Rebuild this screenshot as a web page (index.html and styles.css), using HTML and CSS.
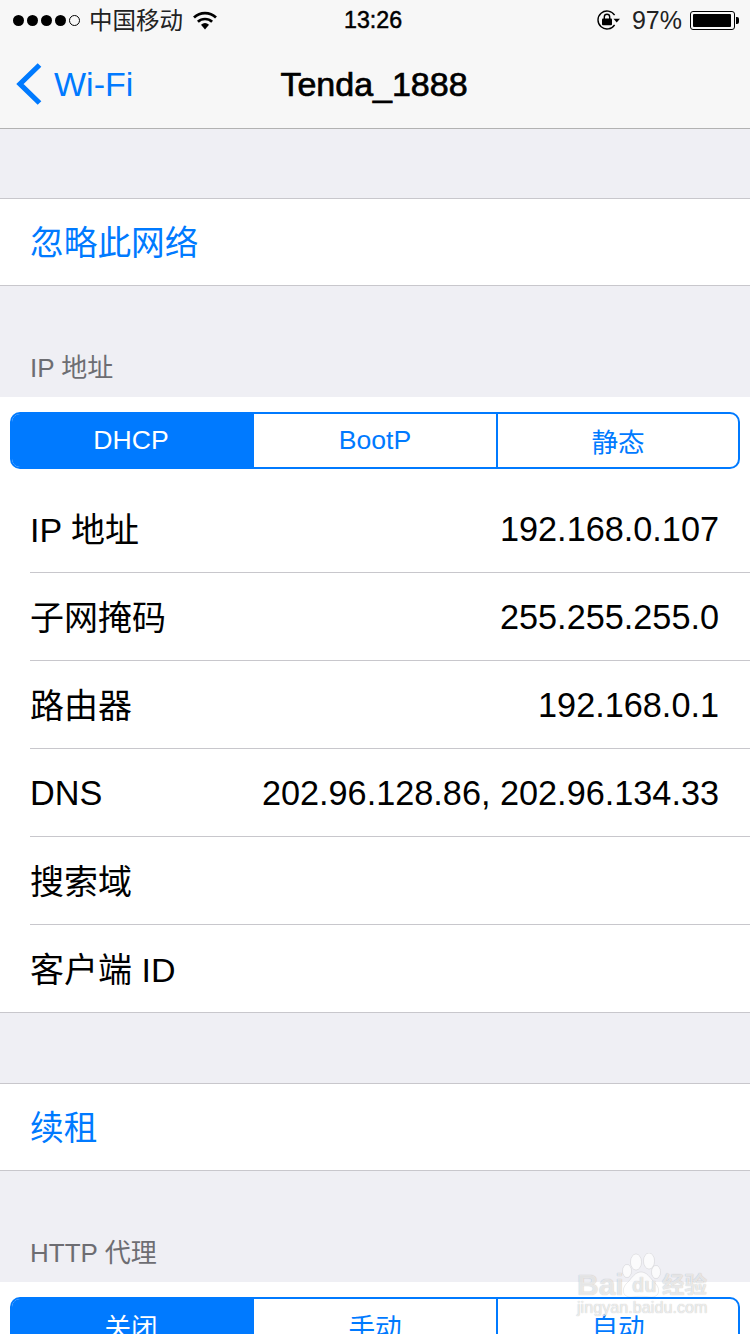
FILE: index.html
```html
<!DOCTYPE html>
<html lang="zh-CN">
<head>
    <meta charset="UTF-8">
    <meta name="viewport" content="width=device-width, initial-scale=1.0">
    <title>Tenda_1888</title>
    <link rel="stylesheet" href="styles.css">
</head>
<body>
    <!-- 状态栏 -->
    <div class="status-bar">
        <div class="status-left">
            <div class="signal">
                <i class="dot"></i><i class="dot"></i><i class="dot"></i><i class="dot"></i><i class="dot empty"></i>
            </div>
            <span class="carrier">中国移动</span>
            <svg class="wifi" width="24" height="19" viewBox="0 0 24 19">
                <path d="M12 18.5 L8 13.8 A6.2 6.2 0 0 1 16 13.8 Z" fill="#000"/>
                <path d="M4.9 10.8 A10.4 10.4 0 0 1 19.1 10.8" fill="none" stroke="#000" stroke-width="2.7"/>
                <path d="M1 6.6 A16 16 0 0 1 23 6.6" fill="none" stroke="#000" stroke-width="2.7"/>
            </svg>
        </div>
        <div class="status-time">13:26</div>
        <div class="status-right">
            <svg class="lock" width="23" height="20" viewBox="0 0 23 20">
                <path d="M17.6 14.8 A9 9 0 1 1 17.6 5.2" fill="none" stroke="#000" stroke-width="1.4"/>
                <path d="M16.5 8.8 L23 8.8 L19.7 12.6 Z" fill="#000"/>
                <rect x="5" y="8.6" width="10" height="6.6" rx="1" fill="#000"/>
                <path d="M7.3 9 V7 A2.7 2.7 0 0 1 12.7 7 V9" fill="none" stroke="#000" stroke-width="1.4"/>
            </svg>
            <span class="percent">97%</span>
            <div class="battery"><div class="battery-fill"></div></div>
        </div>
    </div>

    <!-- 导航栏 -->
    <div class="nav-bar">
        <div class="nav-back">
            <svg width="28" height="44" viewBox="0 0 28 44">
                <path d="M24.5 3 L5 22 L24.5 41" fill="none" stroke="#007aff" stroke-width="5.2"/>
            </svg>
            <span>Wi-Fi</span>
        </div>
        <div class="nav-title">Tenda_1888</div>
    </div>

    <div class="spacer-top"></div>
    <div class="action-row">忽略此网络</div>

    <div class="section-header">IP 地址</div>
    <div class="section">
        <div class="segment">
            <div class="segment-item active">DHCP</div>
            <div class="segment-item">BootP</div>
            <div class="segment-item">静态</div>
        </div>
        <div class="info-row"><span class="label">IP 地址</span><span class="value">192.168.0.107</span></div>
        <div class="info-row"><span class="label">子网掩码</span><span class="value">255.255.255.0</span></div>
        <div class="info-row"><span class="label">路由器</span><span class="value">192.168.0.1</span></div>
        <div class="info-row"><span class="value">DNS</span><span class="value">202.96.128.86, 202.96.134.33</span></div>
        <div class="info-row"><span class="label">搜索域</span></div>
        <div class="info-row last"><span class="label">客户端 ID</span></div>
    </div>

    <div class="spacer-mid"></div>
    <div class="action-row">续租</div>

    <div class="section-header">HTTP 代理</div>
    <div class="section">
        <div class="segment">
            <div class="segment-item active">关闭</div>
            <div class="segment-item">手动</div>
            <div class="segment-item">自动</div>
        </div>
    </div>

    <!-- 水印 -->
    <div class="watermark">
        <svg class="paw" width="42" height="46" viewBox="0 0 42 46">
            <g fill="#fff" fill-opacity="0.75" stroke="#000" stroke-opacity="0.08">
                <ellipse cx="7" cy="18" rx="4.5" ry="6.5"/>
                <ellipse cx="16" cy="9" rx="5.5" ry="8"/>
                <ellipse cx="29" cy="8" rx="5.5" ry="8"/>
                <ellipse cx="36" cy="19" rx="4.5" ry="6.5"/>
                <path d="M21 19 C27 19 30 25 34 29 C42 36 39 45 30 44 C24 43 18 43 12 44 C3 45 0 36 8 29 C12 25 15 19 21 19 Z"/>
            </g>
        </svg>
        <span class="wm-bai">Bai</span>
        <span class="wm-du">du</span>
        <span class="wm-cn">经验</span>
        <span class="wm-url">jingyan.baidu.com</span>
    </div>
</body>
</html>
```

FILE: styles.css
```css
/* 基础样式 */
html, body {
    height: 100%;
}

body {
    margin: 0;
    height: 1334px;
    overflow: hidden;
    position: relative;
    background-color: #efeff4;
    color: #000;
    font-family: "Liberation Sans", "Noto Sans CJK SC", sans-serif;
    font-size: 34px;
}

/* 状态栏 */
.status-bar {
    height: 40px;
    display: grid;
    grid-template-columns: 1fr auto 1fr;
    align-items: center;
    background-color: #f7f7f7;
    font-size: 24px;
}

.status-left {
    display: flex;
    align-items: center;
    padding-left: 13px;
}

.signal {
    display: flex;
    gap: 3px;
    margin-right: 9px;
}

.dot {
    width: 11px;
    height: 11px;
    border-radius: 50%;
    background: #000;
    box-sizing: border-box;
}

.dot.empty {
    background: none;
    border: 1px solid #000;
}

.carrier {
    margin: 0 10px 3px 0;
    font-size: 23.5px;
    color: #222;
}

.status-time {
    width: 58px;
    margin: 0 2px 0 -2px;
    font-size: 23.2px;
    -webkit-text-stroke: 0.5px #000;
    text-align: center;
}

.status-right {
    display: flex;
    align-items: center;
    justify-content: flex-end;
    padding-right: 15px;
}

.percent {
    margin-left: 12px;
    font-size: 25px;
    color: #222;
}

.battery {
    width: 45px;
    height: 19px;
    margin-left: 8px;
    padding: 2px;
    box-sizing: border-box;
    border: 1px solid #000;
    border-radius: 3px;
    position: relative;
}

.battery::after {
    content: "";
    position: absolute;
    right: -5px;
    top: 5px;
    width: 3px;
    height: 7px;
    background: #000;
    border-radius: 0 2px 2px 0;
}

.battery-fill {
    height: 100%;
    width: 97%;
    background: #000;
    border-radius: 1px;
}

/* 导航栏 */
.nav-bar {
    height: 88px;
    background-color: #f7f7f7;
    border-bottom: 1px solid #b2b2b2;
    position: relative;
    display: flex;
    align-items: center;
    justify-content: center;
}

.nav-back {
    position: absolute;
    left: 15px;
    top: 22px;
    display: flex;
    align-items: center;
    gap: 11px;
    color: #007aff;
    font-size: 34px;
}

.nav-back span {
    margin-top: 1px;
}

.nav-title {
    margin: 0 2px 0 0;
    font-size: 34px;
    -webkit-text-stroke: 0.7px #000;
}

/* 列表 */
.spacer-top {
    height: 69px;
}

.spacer-mid {
    height: 70px;
}

.action-row {
    height: 88px;
    box-sizing: border-box;
    padding: 0 0 3px 30px;
    display: flex;
    align-items: center;
    background: #fff;
    border-top: 1px solid #c8c7cc;
    border-bottom: 1px solid #c8c7cc;
    color: #007aff;
    font-size: 33.7px;
}

.section-header {
    height: 111px;
    padding: 0 30px 13px;
    box-sizing: border-box;
    display: flex;
    align-items: flex-end;
    color: #6d6d72;
    font-size: 26px;
}

.section {
    background: #fff;
    padding-top: 15px;
    border-bottom: 1px solid #c8c7cc;
}

.segment {
    display: grid;
    grid-template-columns: 242px 244px 1fr;
    height: 57px;
    margin: 0 10px 16px;
    box-sizing: border-box;
    border: 2px solid #007aff;
    border-radius: 10px;
    overflow: hidden;
    color: #007aff;
    font-size: 26.6px;
}

.segment-item {
    display: flex;
    align-items: center;
    justify-content: center;
}

.segment-item:nth-child(2) {
    border-right: 2px solid #007aff;
}

.segment-item.active {
    background: #007aff;
    color: #fff;
    padding-right: 4px;
}

.info-row {
    height: 87px;
    margin-left: 30px;
    padding-right: 31px;
    display: flex;
    align-items: center;
    justify-content: space-between;
    border-bottom: 1px solid #c8c7cc;
}

.info-row.last {
    border-bottom: none;
}

.label {
    margin-bottom: 3px;
}

.value {
    margin-top: 2px;
    font-size: 34.25px;
}

/* 水印 */
.watermark {
    position: absolute;
    left: 574px;
    top: 1250px;
    width: 140px;
    height: 72px;
    color: rgba(255, 255, 255, 0.7);
    text-shadow: 0 0 1px rgba(0, 0, 0, 0.3);
}

.watermark span {
    position: absolute;
    white-space: nowrap;
}

.paw {
    position: absolute;
    left: 46px;
    top: 3px;
}

.wm-bai {
    left: 3px;
    top: 18px;
    font-size: 30px;
    font-weight: 700;
}

.wm-du {
    left: 58px;
    top: 24px;
    font-size: 20px;
    font-weight: 700;
}

.wm-cn {
    left: 88px;
    top: 17px;
    font-size: 22.5px;
    font-weight: 700;
}

.wm-url {
    left: 3px;
    top: 48px;
    font-size: 16.2px;
}
```
